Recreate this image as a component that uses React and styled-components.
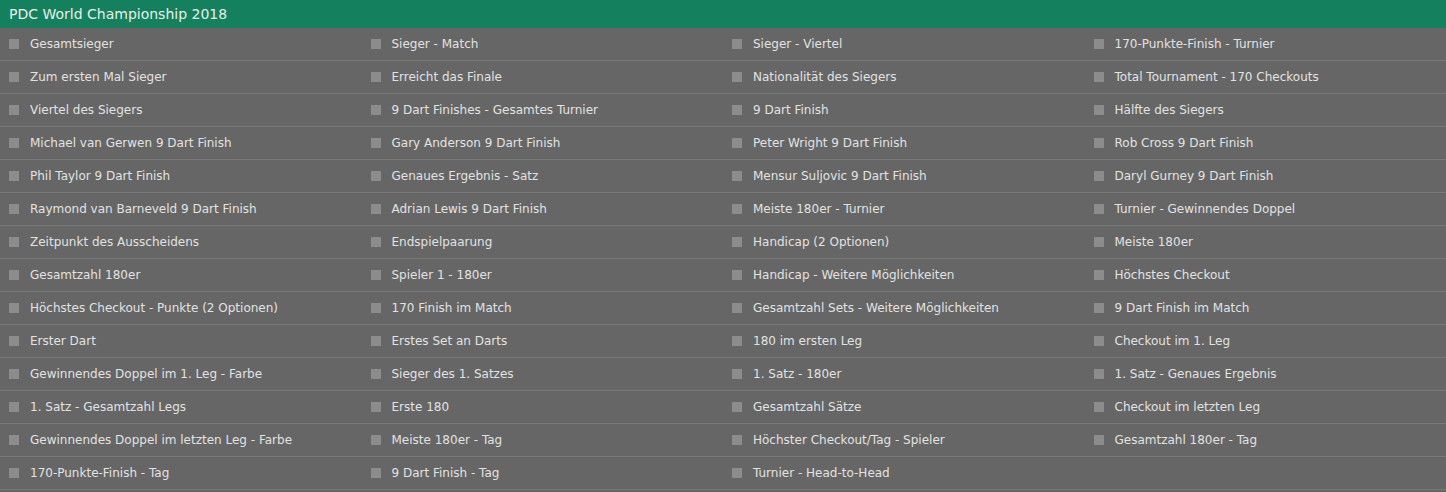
import React from "react";
import styled, { createGlobalStyle } from "styled-components";

const Global = createGlobalStyle`
  html, body { margin: 0; padding: 0; background: #666666; }
  body { font-family: "DejaVu Sans", Tahoma, sans-serif; }
`;

const Panel = styled.section`
  width: 1446px;
  background: #666666;
`;

const Header = styled.header`
  height: 28px;
  background: #14805e;
  color: #e8efe9;
  font-size: 14px;
  line-height: 28px;
  padding-left: 9px;
  box-sizing: border-box;
`;

const Grid = styled.ul`
  list-style: none;
  margin: 0;
  padding: 0;
  display: grid;
  grid-template-columns: repeat(4, 1fr);
`;

const Item = styled.li`
  height: 33px;
  box-sizing: border-box;
  border-bottom: 1px solid #787878;
  display: flex;
  align-items: center;
  padding-left: 9px;
  gap: 11px;
  color: #e2e2e2;
  font-size: 12px;
  padding-bottom: 1px;
`;

const Box = styled.span`
  width: 10px;
  height: 10px;
  background: #8c8c8c;
  flex: none;
`;

const items = [
  "Gesamtsieger", "Sieger - Match", "Sieger - Viertel", "170-Punkte-Finish - Turnier",
  "Zum ersten Mal Sieger", "Erreicht das Finale", "Nationalität des Siegers", "Total Tournament - 170 Checkouts",
  "Viertel des Siegers", "9 Dart Finishes - Gesamtes Turnier", "9 Dart Finish", "Hälfte des Siegers",
  "Michael van Gerwen 9 Dart Finish", "Gary Anderson 9 Dart Finish", "Peter Wright 9 Dart Finish", "Rob Cross 9 Dart Finish",
  "Phil Taylor 9 Dart Finish", "Genaues Ergebnis - Satz", "Mensur Suljovic 9 Dart Finish", "Daryl Gurney 9 Dart Finish",
  "Raymond van Barneveld 9 Dart Finish", "Adrian Lewis 9 Dart Finish", "Meiste 180er - Turnier", "Turnier - Gewinnendes Doppel",
  "Zeitpunkt des Ausscheidens", "Endspielpaarung", "Handicap (2 Optionen)", "Meiste 180er",
  "Gesamtzahl 180er", "Spieler 1 - 180er", "Handicap - Weitere Möglichkeiten", "Höchstes Checkout",
  "Höchstes Checkout - Punkte (2 Optionen)", "170 Finish im Match", "Gesamtzahl Sets - Weitere Möglichkeiten", "9 Dart Finish im Match",
  "Erster Dart", "Erstes Set an Darts", "180 im ersten Leg", "Checkout im 1. Leg",
  "Gewinnendes Doppel im 1. Leg - Farbe", "Sieger des 1. Satzes", "1. Satz - 180er", "1. Satz - Genaues Ergebnis",
  "1. Satz - Gesamtzahl Legs", "Erste 180", "Gesamtzahl Sätze", "Checkout im letzten Leg",
  "Gewinnendes Doppel im letzten Leg - Farbe", "Meiste 180er - Tag", "Höchster Checkout/Tag - Spieler", "Gesamtzahl 180er - Tag",
  "170-Punkte-Finish - Tag", "9 Dart Finish - Tag", "Turnier - Head-to-Head", "",
];

export default function App() {
  return (
    <>
      <Global />
      <Panel>
        <Header>PDC World Championship 2018</Header>
        <Grid>
          {items.map((t, i) => (
            <Item key={i}>
              {t && <Box />}
              {t}
            </Item>
          ))}
        </Grid>
      </Panel>
    </>
  );
}
